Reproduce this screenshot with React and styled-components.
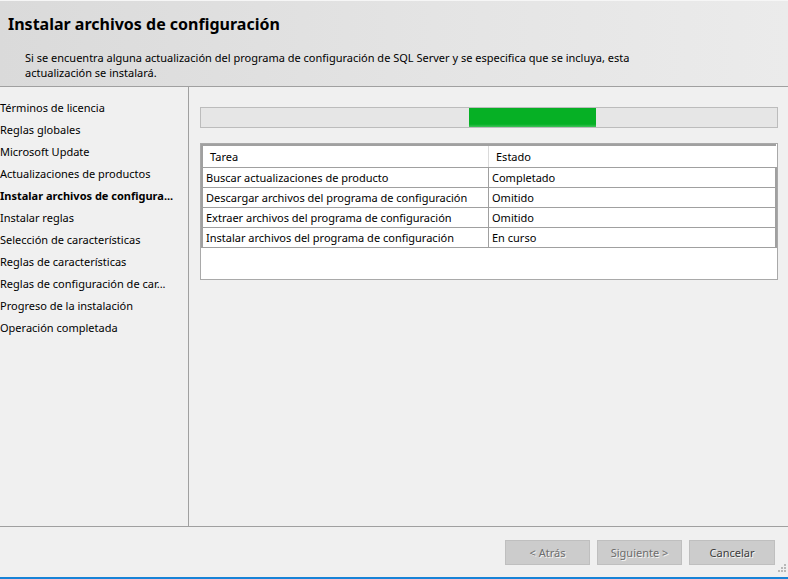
import React from 'react'
import styled, { createGlobalStyle } from 'styled-components'

const Global = createGlobalStyle`
	html, body {
		margin: 0;
		padding: 0;
		background: #f0f0f0;
	}
	body {
		font-family: 'Noto Sans', 'Open Sans', sans-serif;
		font-size: 11px;
		color: #000;
	}
`

const Window = styled.div`
	position: relative;
	width: 788px;
	height: 579px;
	display: flex;
	flex-direction: column;
	background: #f0f0f0;
	overflow: hidden;
`

const Header = styled.div`
	height: 87px;
	flex: none;
	border-bottom: 1px solid #a0a0a0;
	background: linear-gradient(to right, #dadada 0%, #e4e4e4 55%, #ebebeb 100%);
	box-shadow: inset 0 1px 0 #f6f6f6;
	padding: 12px 0 0 8px;
	box-sizing: border-box;
`

const Title = styled.h1`
	margin: 0;
	font-size: 16px;
	font-weight: 700;
	line-height: 24px;
	color: #000;
`

const Description = styled.p`
	margin: 14px 0 0 17px;
	width: 660px;
	font-size: 11px;
	line-height: 15px;
`

const Body = styled.div`
	flex: 1;
	display: flex;
	min-height: 0;
`

const Nav = styled.ul`
	list-style: none;
	margin: 0;
	width: 188px;
	flex: none;
	border-right: 1px solid #a0a0a0;
	padding: 12px 0 0 0;
`

const NavItem = styled.li`
	height: 22px;
	line-height: 18px;
	white-space: nowrap;
	font-weight: ${p => (p.$active ? 700 : 400)};
`

const Content = styled.div`
	flex: 1;
	padding: 20px 10px 0 11px;
	display: flex;
	flex-direction: column;
`

const Progress = styled.div`
	height: 19px;
	border: 1px solid #bcbcbc;
	background: #e6e6e6;
	display: flex;
`

const ProgressGap = styled.div`
	width: 268px;
`

const ProgressFill = styled.div`
	width: 127px;
	background: linear-gradient(to bottom, #06b025 0%, #06b025 85%, #3fc359 100%);
`

const TableBox = styled.div`
	margin-top: 15px;
	height: 135px;
	border: 1px solid #a9a9a9;
	background: #fff;
`

const Table = styled.table`
	width: 100%;
	border-collapse: collapse;
	table-layout: fixed;
`

const HeadCell = styled.th`
	height: 21px;
	padding: 0 0 0 7px;
	text-align: left;
	font-weight: 400;
	border: 1px solid #a0a0a0;
	border-top: 2px solid #a0a0a0;
	border-left: ${p => (p.$first ? '2px solid #a0a0a0' : '1px solid #a0a0a0')};
	border-right: ${p => (p.$first ? '1px solid #dadada' : 'none')};
	width: ${p => p.$w || 'auto'};
`

const Cell = styled.td`
	height: 19px;
	padding: 0 0 0 3px;
	border: 1px solid #a0a0a0;
	border-left: ${p => (p.$first ? '2px solid #a0a0a0' : '1px solid #a0a0a0')};
	border-right: ${p => (p.$first ? '1px solid #a0a0a0' : '2px solid #a0a0a0')};
	white-space: nowrap;
`

const Footer = styled.div`
	height: 53px;
	flex: none;
	border-top: 1px solid #a0a0a0;
	border-bottom: 2px solid #1883d7;
	display: flex;
	justify-content: flex-end;
	align-items: flex-start;
	gap: 7px;
	padding: 13px 13px 0 0;
	box-sizing: border-box;
`

const Button = styled.button`
	width: ${p => (p.$enabled ? 86 : 85)}px;
	height: 25px;
	border: 1px solid #bfbfbf;
	background: #cccccc;
	font-family: inherit;
	font-size: 11px;
	color: ${p => (p.$enabled ? '#3c3c3c' : '#6d6d6d')};
	text-shadow: 1px 1px 0 #f4f4f4;
	padding: 0;
`

const Grip = styled.svg`
	position: absolute;
	right: 1px;
	bottom: 3px;
`

const steps = [
	'Términos de licencia',
	'Reglas globales',
	'Microsoft Update',
	'Actualizaciones de productos',
	'Instalar archivos de configura...',
	'Instalar reglas',
	'Selección de características',
	'Reglas de características',
	'Reglas de configuración de car...',
	'Progreso de la instalación',
	'Operación completada',
]

const tasks = [
	['Buscar actualizaciones de producto', 'Completado'],
	['Descargar archivos del programa de configuración', 'Omitido'],
	['Extraer archivos del programa de configuración', 'Omitido'],
	['Instalar archivos del programa de configuración', 'En curso'],
]

export default function App() {
	return (
		<Window>
			<Global />
			<Header>
				<Title>Instalar archivos de configuración</Title>
				<Description>
					Si se encuentra alguna actualización del programa de configuración de SQL Server y se
					especifica que se incluya, esta actualización se instalará.
				</Description>
			</Header>
			<Body>
				<Nav>
					{steps.map((s, i) => (
						<NavItem key={s} $active={i === 4}>
							{s}
						</NavItem>
					))}
				</Nav>
				<Content>
					<Progress>
						<ProgressGap />
						<ProgressFill />
					</Progress>
					<TableBox>
						<Table>
							<thead>
								<tr>
									<HeadCell $first $w='278px'>
										Tarea
									</HeadCell>
									<HeadCell>Estado</HeadCell>
								</tr>
							</thead>
							<tbody>
								{tasks.map(([t, e]) => (
									<tr key={t}>
										<Cell $first>{t}</Cell>
										<Cell>{e}</Cell>
									</tr>
								))}
							</tbody>
						</Table>
					</TableBox>
				</Content>
			</Body>
			<Footer>
				<Button disabled>&lt; Atrás</Button>
				<Button disabled>Siguiente &gt;</Button>
				<Button $enabled>Cancelar</Button>
			</Footer>
			<Grip width='12' height='12' viewBox='0 0 12 12'>
				{[
					[9, 0],
					[6, 3],
					[9, 3],
					[3, 6],
					[6, 6],
					[9, 6],
				].map(([x, y]) => (
					<rect key={`${x}-${y}`} x={x} y={y} width='2' height='2' fill='#b8b8b8' />
				))}
			</Grip>
		</Window>
	)
}
